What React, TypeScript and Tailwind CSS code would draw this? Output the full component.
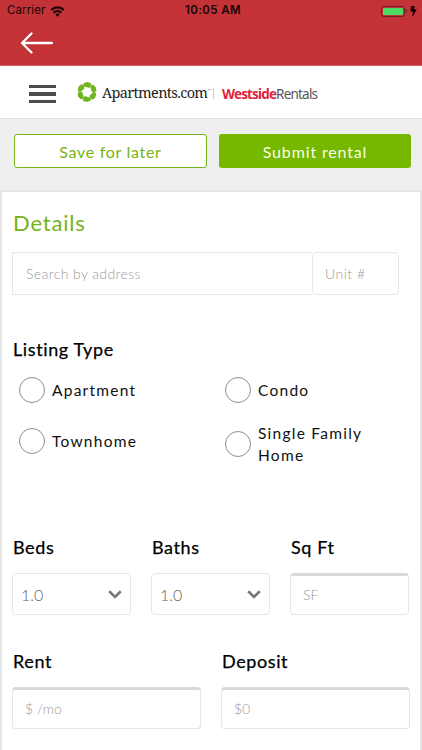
import type { ReactNode } from 'react'
import { FaBolt } from 'react-icons/fa'

function StatusBar() {
  return (
    <div className="flex h-[22px] items-center pl-[7px] pr-[5px] font-['Inter','Liberation_Sans',sans-serif] text-[#180304]">
      <div className="flex flex-1 items-center gap-[5px]">
        <span className="text-[11.5px] tracking-[0.1px]">Carrier</span>
        <svg width="15" height="11" viewBox="0 0 14 11" fill="none" stroke="currentColor" strokeWidth="2.2">
          <path d="M0.8 4.1a8.6 8.6 0 0 1 12.4 0" />
          <path d="M3.1 6.8a5.4 5.4 0 0 1 7.8 0" />
          <path d="M7 10.8 4.8 8.6a3 3 0 0 1 4.4 0z" fill="currentColor" stroke="none" />
        </svg>
      </div>
      <span className="pl-[2px] text-[11.5px] font-semibold tracking-[0.4px]">10:05 AM</span>
      <div className="flex flex-1 items-center justify-end">
        <div className="h-[11px] w-[24px] rounded-[3px] border border-[#701c1f] p-px">
          <div className="h-full rounded-[1px] bg-[#4cd964]" />
        </div>
        <div className="ml-px h-1 w-[1.5px] rounded-r bg-[#701c1f]" />
        <FaBolt className="ml-[3px] h-[10px] w-[7px]" />
      </div>
    </div>
  )
}

const BLADES = [0, 60, 120, 180, 240, 300]

function Logo() {
  return (
    <div className="flex items-center">
      <svg className="-mt-[3px]" width="20" height="20" viewBox="-10 -10 20 20" fill="#6fb41c">
        {BLADES.map((deg) => (
          <path key={deg} d="M-3.2 -9 L0.6 -9.9 L4.4 -8.4 L2.4 -4 L-4.2 -5.9 Z" transform={`rotate(${deg})`} />
        ))}
      </svg>
      <span className="-mt-[3px] ml-[5px] w-[106px] whitespace-nowrap font-['Noto_Serif','Liberation_Serif',serif] text-[14.5px] leading-5 tracking-[-0.65px] text-[#222]">
        Apartments.com
      </span>
      <span className="-mt-[6px] w-[4px] text-[4px] leading-3 text-[#555]">™</span>
      <span className="ml-px h-[11px] w-px bg-[#ccc]" />
      <span className="ml-[8px] whitespace-nowrap font-['Noto_Sans',sans-serif] text-[13.5px] leading-5 text-[#555]">
        <b className="tracking-[-0.85px] text-[#e0243a]">Westside</b>
        <span className="tracking-[-0.8px]">Rentals</span>
      </span>
    </div>
  )
}

function Label({ children }: { children: ReactNode }) {
  return <div className="text-[18px] leading-6 tracking-[0.6px] [-webkit-text-stroke:0.25px_black] text-black">{children}</div>
}

function Radio({ label }: { label: string }) {
  return (
    <label className="flex items-center gap-[7px]">
      <span className="h-[26px] w-[26px] shrink-0 rounded-full border border-[#8e8e8e]" />
      <span className="text-[15.5px] leading-[22px] tracking-[1.25px] text-[#111]">{label}</span>
    </label>
  )
}

function Select({ value }: { value: string }) {
  return (
    <div className="flex h-[42px] items-center justify-between rounded-[4px] border border-[#e6e6e6] px-[8px] pt-px">
      <span className="text-[16px] font-light text-[#666]">{value}</span>
      <svg width="14" height="9" viewBox="0 0 14 9" fill="none" stroke="#777" strokeWidth="2.6">
        <path d="m1.2 1.3 5.8 5.6 5.8-5.6" />
      </svg>
    </div>
  )
}

function Field({ placeholder }: { placeholder: string }) {
  return (
    <div className="flex h-[42px] items-center rounded-[4px] border border-t-[3px] border-[#e6e6e6] border-t-[#d9d9d9] pb-px pl-3 text-[14px] font-light text-[#999]">
      {placeholder}
    </div>
  )
}

export default function App() {
  return (
    <div className="h-[750px] w-[422px] overflow-hidden bg-[#efefef] font-['Lato','Liberation_Sans',sans-serif]">
      <header className="h-[66px] border-b border-[#cf6568] bg-[#c23237]">
        <StatusBar />
        <svg className="ml-5 mt-[10px]" width="34" height="22" viewBox="0 0 34 22" fill="none" stroke="white" strokeWidth="2.3" strokeLinecap="round" strokeLinejoin="round">
          <path d="M32 11H2M11.5 1.5 2 11l9.5 9.5" />
        </svg>
      </header>

      <nav className="flex h-[53px] items-center border-b border-[#e4e4e4] bg-white pl-[29px] pt-[3px]">
        <div className="mr-[21px] mt-px flex w-[27px] flex-col gap-[4px]">
          <span className="h-[3.5px] bg-[#4c4c4c]" />
          <span className="h-[3.5px] bg-[#4c4c4c]" />
          <span className="h-[3.5px] bg-[#4c4c4c]" />
        </div>
        <Logo />
      </nav>

      <div className="flex gap-3 pb-[22px] pl-[14px] pt-[15px]">
        <button className="h-[34px] w-[193px] rounded-[3px] border border-[#78b41e] bg-white pt-px text-[16px] tracking-[0.7px] text-[#76b410]">
          Save for later
        </button>
        <button className="h-[34px] w-[192px] rounded-[3px] bg-[#76b800] pt-px text-[16px] tracking-[0.85px] text-[#f7ffe6]">
          Submit rental
        </button>
      </div>

      <main className="h-[570px] border-2 border-b-0 border-[#e6e6e6] bg-white pl-[11px]">
        <h1 className="pt-[16px] text-[22px] leading-[30px] tracking-[0.8px] text-[#74b416]">Details</h1>

        <div className="-ml-px mt-[14px] flex text-[14px] font-light text-[#999]">
          <div className="flex h-[43px] w-[300px] items-center border border-r-0 border-[#e6e6e6] pl-[13px] tracking-[0.4px]">
            Search by address
          </div>
          <div className="flex h-[43px] w-[87px] items-center rounded-[5px] border border-[#e6e6e6] pl-3 tracking-[0.5px]">
            Unit #
          </div>
        </div>

        <div className="pt-[42px]">
          <Label>Listing Type</Label>
        </div>
        <div className="ml-[6px] mt-[16px] grid h-[158px] grid-cols-[206px_150px] content-start gap-y-[19px]">
          <Radio label="Apartment" />
          <Radio label="Condo" />
          <div className="pt-[6px]">
            <Radio label="Townhome" />
          </div>
          <Radio label="Single Family Home" />
        </div>

        <div className="-ml-px grid grid-cols-[119px_119px_119px] gap-x-5 gap-y-[14px] [&>*:nth-child(-n+3)]:pl-px">
          <Label>Beds</Label>
          <Label>Baths</Label>
          <Label>Sq Ft</Label>
          <Select value="1.0" />
          <Select value="1.0" />
          <Field placeholder="SF" />
        </div>

        <div className="-ml-px mt-[34px] grid grid-cols-[189px_189px] gap-x-5 gap-y-[14px] [&>*:nth-child(-n+2)]:pl-px">
          <Label>Rent</Label>
          <Label>Deposit</Label>
          <Field placeholder="$ /mo" />
          <Field placeholder="$0" />
        </div>
      </main>
    </div>
  )
}
